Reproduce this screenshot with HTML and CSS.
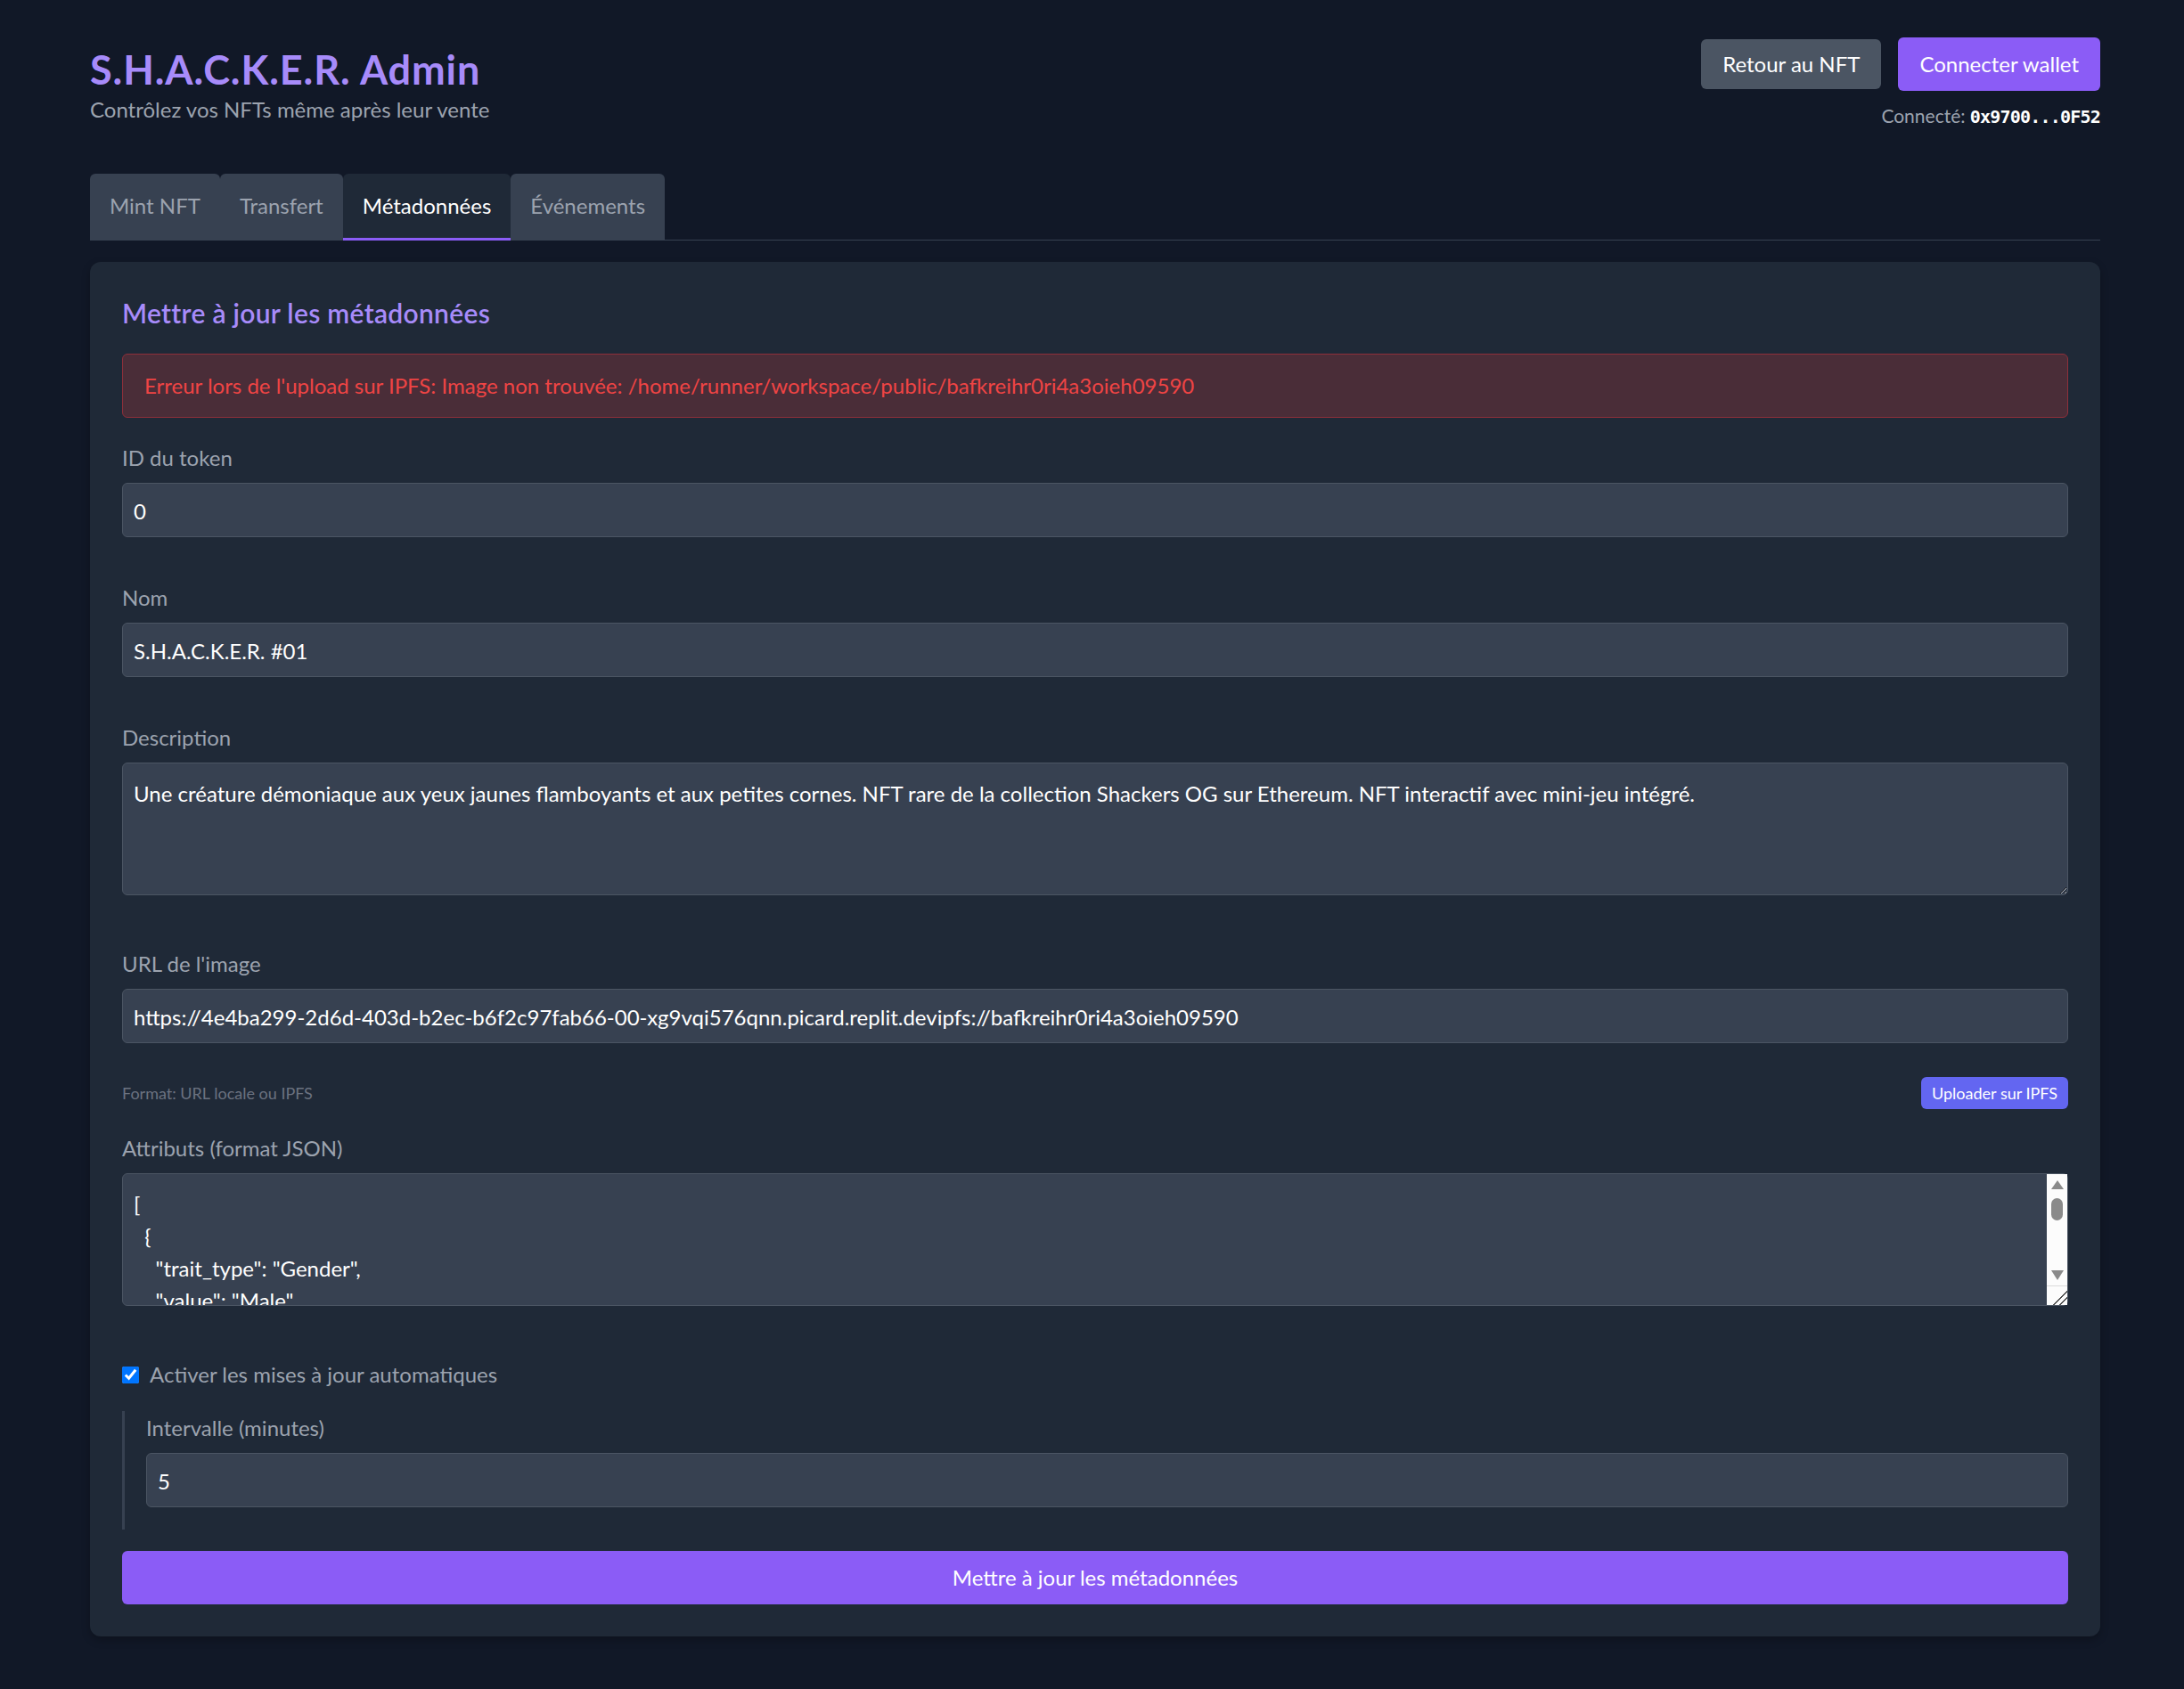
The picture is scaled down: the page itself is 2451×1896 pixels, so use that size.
FILE: index.html
```html
<!DOCTYPE html>
<html lang="fr">
<head>
<meta charset="utf-8">
<title>S.H.A.C.K.E.R. Admin</title>
<link rel="stylesheet" href="styles.css">
</head>
<body>
<div class="page">
  <header class="header">
    <div class="brand">
      <h1 class="title">S.H.A.C.K.E.R. Admin</h1>
      <p class="subtitle">Contrôlez vos NFTs même après leur vente</p>
    </div>
    <div class="account">
      <div class="actions">
        <button class="btn btn-gray">Retour au NFT</button>
        <button class="btn btn-purple">Connecter wallet</button>
      </div>
      <div class="connected">Connecté: <span class="addr">0x9700...0F52</span></div>
    </div>
  </header>

  <nav class="tabs">
    <button class="tab">Mint NFT</button>
    <button class="tab">Transfert</button>
    <button class="tab tab-active">Métadonnées</button>
    <button class="tab">Événements</button>
  </nav>

  <section class="card">
    <h2 class="card-title">Mettre à jour les métadonnées</h2>
    <div class="alert">Erreur lors de l'upload sur IPFS: Image non trouvée: /home/runner/workspace/public/bafkreihr0ri4a3oieh09590</div>

    <div class="field">
      <label class="label">ID du token</label>
      <input class="input" type="text" value="0">
    </div>

    <div class="field">
      <label class="label">Nom</label>
      <input class="input" type="text" value="S.H.A.C.K.E.R. #01">
    </div>

    <div class="field field-area">
      <label class="label">Description</label>
      <textarea class="input textarea">Une créature démoniaque aux yeux jaunes flamboyants et aux petites cornes. NFT rare de la collection Shackers OG sur Ethereum. NFT interactif avec mini-jeu intégré.</textarea>
    </div>

    <div class="field field-url">
      <label class="label">URL de l'image</label>
      <input class="input" type="text" value="https://4e4ba299-2d6d-403d-b2ec-b6f2c97fab66-00-xg9vqi576qnn.picard.replit.devipfs://bafkreihr0ri4a3oieh09590">
      <div class="help-row">
        <span class="help">Format: URL locale ou IPFS</span>
        <button class="btn-small">Uploader sur IPFS</button>
      </div>
    </div>

    <div class="field field-area">
      <label class="label">Attributs (format JSON)</label>
      <div class="area-wrap">
        <textarea class="input textarea json">[
  {
    "trait_type": "Gender",
    "value": "Male"
  },
  {
    "trait_type": "Type",
    "value": "Demon"
  },
  {
    "trait_type": "Eyes",
    "value": "Yellow"
  }
]</textarea>
        <div class="fake-scroll" aria-hidden="true">
          <span class="sb-up"></span>
          <span class="sb-thumb"></span>
          <span class="sb-down"></span>
          <span class="sb-corner"></span>
        </div>
      </div>
    </div>

    <label class="check-row">
      <input class="checkbox" type="checkbox" checked>
      <span>Activer les mises à jour automatiques</span>
    </label>

    <div class="auto-block">
      <label class="label">Intervalle (minutes)</label>
      <input class="input" type="text" value="5">
    </div>

    <button class="btn-submit">Mettre à jour les métadonnées</button>
  </section>
</div>
</body>
</html>
```
FILE: styles.css
```css
* { box-sizing: border-box; }

html, body {
  margin: 0;
  background: #111827;
}

body {
  font-family: "Segoe UI", Lato, "Noto Sans", sans-serif;
  font-size: 24px;
  line-height: 36px;
  color: #ffffff;
  min-height: 1896px;
}

.page {
  padding: 42px 94px 40px 101px;
}

.header {
  display: flex;
  justify-content: space-between;
  align-items: flex-start;
}

.brand { margin-top: 9px; }

.title {
  margin: 0;
  font-size: 45px;
  line-height: 54px;
  font-weight: 700;
  letter-spacing: 0.9px;
  color: #a78bfa;
}

.subtitle {
  margin: 0;
  font-size: 24px;
  line-height: 36px;
  color: #9ca3af;
}

.account {
  display: flex;
  flex-direction: column;
  align-items: flex-end;
}

.actions {
  display: flex;
  align-items: center;
  gap: 19px;
}

.btn {
  font-family: inherit;
  font-size: 24px;
  line-height: 36px;
  color: #ffffff;
  border: none;
  border-radius: 6px;
  padding: 12px 24px;
  cursor: pointer;
}

.btn-gray {
  background: #4b5563;
  padding: 10px 24px;
}

.btn-purple { background: #8b5cf6; }

.connected {
  margin-top: 12px;
  font-size: 21px;
  line-height: 32px;
  color: #9ca3af;
}

.addr {
  font-family: "DejaVu Sans Mono", "Liberation Mono", monospace;
  font-weight: 700;
  font-size: 20px;
  letter-spacing: -0.8px;
  color: #ffffff;
}

.tabs {
  display: flex;
  margin-top: 48px;
  border-bottom: 1px solid #374151;
}

.tab {
  font-family: inherit;
  font-size: 24px;
  line-height: 36px;
  padding: 18px 22px 18px;
  border: none;
  border-bottom: 3px solid transparent;
  border-radius: 6px 6px 0 0;
  background: #374151;
  color: #9ca3af;
  margin-bottom: -1px;
  cursor: pointer;
}

.tab-active {
  background: #1f2937;
  color: #ffffff;
  border-bottom-color: #8b5cf6;
}

.card {
  margin-top: 24px;
  background: #1f2937;
  border-radius: 12px;
  padding: 36px;
  box-shadow: 0 4px 10px rgba(0, 0, 0, 0.25);
}

.card-title {
  margin: 0 0 25px;
  font-size: 30px;
  line-height: 42px;
  font-weight: 600;
  letter-spacing: 0.3px;
  color: #a78bfa;
}

.alert {
  background: #4a2d38;
  border: 1px solid #8d2f3a;
  border-radius: 6px;
  padding: 17px 24px;
  color: #ef4444;
  margin-bottom: 27px;
}

.field { margin-bottom: 50px; }
.field-area { margin-bottom: 59px; }
.field-url { margin-bottom: 26px; }

.label {
  display: block;
  color: #9ca3af;
  margin-bottom: 10px;
}

.input {
  display: block;
  width: 100%;
  height: 61px;
  font-family: inherit;
  font-size: 24px;
  line-height: 36px;
  color: #ffffff;
  background: #374151;
  border: 1px solid #4b5563;
  border-radius: 6px;
  padding: 12px 12px 10px;
  outline: none;
}

.textarea {
  height: 149px;
  padding-top: 16px;
  resize: vertical;
  white-space: pre-wrap;
}

.area-wrap { position: relative; }

.json {
  overflow: hidden;
  resize: none;
  padding-right: 36px;
}

.fake-scroll {
  position: absolute;
  top: 1px;
  right: 1px;
  bottom: 1px;
  width: 23px;
  background: #fcfcfc;
  display: flex;
  flex-direction: column;
  align-items: center;
}

.sb-up {
  width: 0;
  height: 0;
  margin-top: 7px;
  border-left: 7.5px solid transparent;
  border-right: 7.5px solid transparent;
  border-bottom: 10px solid #8a8a8a;
}

.sb-thumb {
  width: 13px;
  height: 25px;
  margin-top: 10px;
  border-radius: 7px;
  background: #8a8a8a;
}

.sb-down {
  width: 0;
  height: 0;
  margin-top: 56px;
  border-left: 7.5px solid transparent;
  border-right: 7.5px solid transparent;
  border-top: 11px solid #8a8a8a;
}

.sb-corner {
  align-self: stretch;
  flex: 1;
  margin-top: 6px;
  border-top: 1px solid #dcdcdc;
  background:
    linear-gradient(135deg, transparent 62%, #4b4b4b 62% 68%, transparent 68% 78%, #4b4b4b 78% 84%, transparent 84%);
}

.help-row {
  display: flex;
  justify-content: space-between;
  align-items: center;
  margin-top: 38px;
}

.help {
  font-size: 18px;
  line-height: 24px;
  color: #6b7280;
}

.btn-small {
  font-family: inherit;
  font-size: 18px;
  line-height: 24px;
  color: #ffffff;
  background: #6366f1;
  border: none;
  border-radius: 6px;
  padding: 6px 12px;
  cursor: pointer;
}

.check-row {
  display: flex;
  align-items: center;
  gap: 12px;
  color: #9ca3af;
  margin-bottom: 23px;
}

.checkbox {
  width: 19px;
  height: 19px;
  margin: 0;
}

.auto-block {
  border-left: 3px solid #374151;
  padding: 1px 0 25px 24px;
  margin-bottom: 24px;
}

.btn-submit {
  display: block;
  width: 100%;
  font-family: inherit;
  font-size: 24px;
  line-height: 36px;
  color: #ffffff;
  background: #8b5cf6;
  border: none;
  border-radius: 6px;
  padding: 12px 24px;
  cursor: pointer;
}
```
